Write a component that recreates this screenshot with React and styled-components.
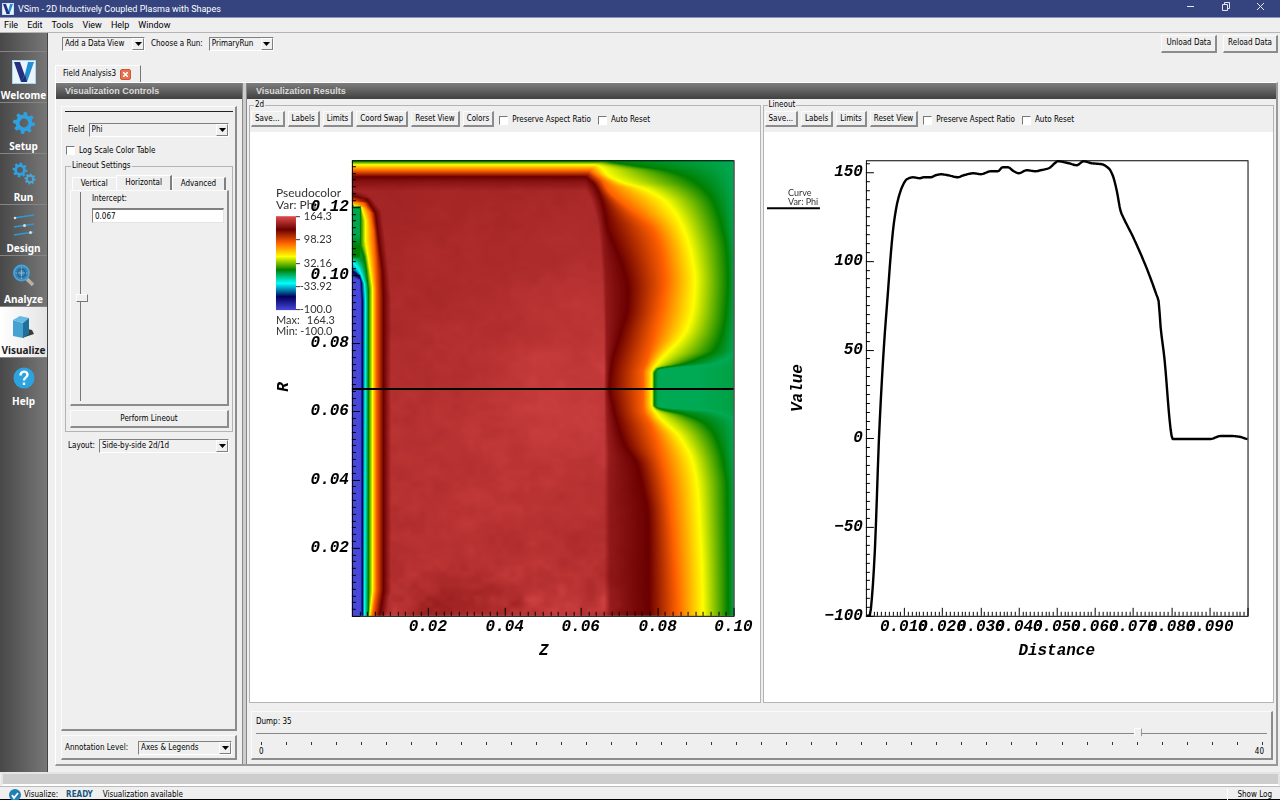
import React, { useEffect, useRef, useState } from 'react';
import styled, { createGlobalStyle, css } from 'styled-components';

const GlobalStyle = createGlobalStyle`
  * {
    box-sizing: border-box;
  }
  body {
    margin: 0;
    background: #efefef;
    color: #000;
    font-family: 'DejaVu Sans Condensed', 'DejaVu Sans', sans-serif;
    font-size: 8px;
    line-height: 12px;
  }
  button, input, select {
    font: inherit;
    color: inherit;
    margin: 0;
  }
`;

/** layout */

const Window = styled.div`
  min-height: 100vh;
  display: flex;
  flex-direction: column;
  overflow: hidden;
`;

const TitleBar = styled.header`
  display: flex;
  align-items: center;
  height: 18px;
  padding: 0 2px;
  background: #35447f;
  border-bottom: 1px solid #8d97b8;
  color: #fff;
`;

const WindowTitle = styled.h1`
  flex: 1;
  margin: 0;
  padding-left: 4px;
  font-family: Roboto, sans-serif;
  font-size: 9px;
  font-weight: 400;
`;

const WindowButton = styled.button`
  width: 35px;
  height: 16px;
  padding: 0;
  border: 0;
  background: none;
  color: #e4e7f2;
`;

const MenuBar = styled.nav`
  display: flex;
  align-items: center;
  gap: 9px;
  height: 15px;
  padding: 0 4px;
  border-bottom: 1px solid #b5b5b5;
`;

const MenuItem = styled.button`
  padding: 0;
  border: 0;
  background: none;
  font-family: Roboto, sans-serif;
  font-size: 9px;
`;

const Body = styled.div`
  flex: 1;
  display: flex;
`;

const Sidebar = styled.nav`
  flex: none;
  width: 48px;
  padding-top: 18px;
  background: linear-gradient(90deg, #484848, #777);
  border-right: 1px solid #444;
`;

const SideItem = styled.button`
  display: flex;
  flex-direction: column;
  align-items: center;
  justify-content: flex-end;
  gap: 5px;
  width: 100%;
  height: 51px;
  padding: 0;
  border: 0;
  border-top: 1px solid #858585;
  background: ${(props) => (props.$active ? 'linear-gradient(90deg, #fff, #e4e4e4)' : 'none')};
  color: ${(props) => (props.$active ? '#222' : '#fff')};
  font-family: 'Noto Sans', sans-serif;
  font-size: 10px;
  font-weight: 700;
  line-height: 13px;
`;

const Main = styled.main`
  flex: 1;
  min-width: 0;
  display: flex;
  flex-direction: column;
  padding: 0 2px 6px 7px;
`;

const TopBar = styled.div`
  display: flex;
  align-items: center;
  gap: 6px;
  height: 21px;
  padding-left: 7px;
`;

const Spacer = styled.div`
  flex: 1;
`;

const TabStrip = styled.div`
  display: flex;
  margin-top: 11px;
`;

const FileTab = styled.div`
  display: flex;
  align-items: center;
  gap: 4px;
  height: 17px;
  padding: 0 9px 0 7px;
  border-top: 1px solid #fff;
  border-left: 1px solid #fff;
  border-right: 1px solid #777;
`;

const CloseTab = styled.button`
  display: flex;
  align-items: center;
  justify-content: center;
  width: 11px;
  height: 11px;
  padding: 0;
  border: 1px solid #c9573b;
  border-radius: 2px;
  background: #e9714e;
  color: #fff;
`;

const Workspace = styled.div`
  flex: 1;
  display: flex;
  border: 1px solid #fff;
  border-right: 2px solid #999;
  border-bottom: 2px solid #999;
`;

const ControlsColumn = styled.section`
  flex: none;
  width: 186px;
  display: flex;
  flex-direction: column;
`;

const Splitter = styled.div`
  flex: none;
  width: 5px;
  background: #cdcdcd;
  border-left: 1px solid #888;
  border-right: 1px solid #888;
`;

const ResultsColumn = styled.section`
  flex: 1;
  min-width: 0;
  display: flex;
  flex-direction: column;
`;

const PanelTitle = styled.h2`
  height: 16px;
  margin: 0;
  padding-left: 9px;
  background: linear-gradient(#7e7e7e, #404040);
  color: #dadada;
  font-family: 'Liberation Sans', sans-serif;
  font-size: 9px;
  font-weight: 700;
  line-height: 16px;
`;

const raised = css`
  border: 1px solid #fbfbfb;
  border-right: 2px solid #8c8c8c;
  border-bottom: 2px solid #8c8c8c;
`;

const ControlsFrame = styled.div`
  ${raised}
  flex: 1;
  display: flex;
  flex-direction: column;
  margin: 7px 5px 4px 5px;
  padding: 4px 2px 4px 3px;
`;

const Rule = styled.hr`
  width: 100%;
  margin: 0 0 11px;
  border: 0;
  border-top: 1px solid #222;
`;

const Row = styled.div`
  display: flex;
  align-items: center;
  gap: 4px;
  height: 14px;
  padding: 0 4px 0 3px;
`;

const LayoutRow = styled(Row)`
  margin-top: 7px;
`;

const CheckRow = styled.div`
  display: flex;
  align-items: center;
  height: 13px;
  margin: 7px 0 3px 1px;
`;

const CheckLabel = styled.label`
  display: flex;
  align-items: center;
  gap: 4px;
`;

const Checkbox = styled.input`
  appearance: none;
  width: 9px;
  height: 9px;
  border: 1px solid #fff;
  border-top-color: #777;
  border-left-color: #777;
  background: #fff;
  &:checked {
    background: #555;
  }
`;

const Button = styled.button`
  ${raised}
  height: ${(props) => (props.$tall ? 18 : 16)}px;
  padding: 0 ${(props) => (props.$tall ? 4 : 3)}px;
  background: #efefef;
  line-height: 12px;
  white-space: nowrap;
`;

const WideButton = styled(Button)`
  display: block;
  width: 100%;
`;

const SelectBox = styled.span`
  display: grid;
  flex: ${(props) => (props.$width ? 'none' : 1)};
  width: ${(props) => (props.$width ? `${props.$width}px` : 'auto')};
  height: 14px;
  border: 1px solid #fff;
  border-top-color: #808080;
  border-left-color: #808080;
`;

const Select = styled.select`
  grid-area: 1 / 1;
  appearance: none;
  width: 100%;
  height: 12px;
  padding: 0 12px 0 2px;
  border: 0;
  border-radius: 0;
  background: #f0f0f0;
  line-height: 12px;
`;

const SelectArrow = styled.span`
  grid-area: 1 / 1;
  justify-self: end;
  display: flex;
  align-items: center;
  justify-content: center;
  width: 12px;
  border: 1px solid #fff;
  border-right-color: #808080;
  border-bottom-color: #808080;
  background: #efefef;
  pointer-events: none;
`;

const Group = styled.fieldset`
  min-width: 0;
  margin: 0;
  padding: 0 3px 3px 4px;
  border: 1px solid #b4b4b4;
`;

const Legend = styled.legend`
  height: 12px;
  margin-left: 1px;
  padding: 0 1px;
  line-height: 12px;
`;

const SubTabs = styled.div`
  display: flex;
  align-items: flex-end;
  height: 15px;
  margin: 3px 3px 0 2px;
`;

const SubTab = styled.button`
  flex: auto;
  height: ${(props) => (props.$active ? 15 : 13)}px;
  padding: 0;
  border: 0;
  border-top: 1px solid #fff;
  border-left: 1px solid #fff;
  border-right: ${(props) => (props.$flat ? '1px solid #efefef' : '2px solid #808080')};
  background: none;
`;

const SubPage = styled.div`
  ${raised}
  display: flex;
  gap: 4px;
  height: 216px;
  padding: 1px 3px 3px 4px;
  margin-bottom: 4px;
`;

const InterceptSlider = styled.input`
  appearance: none;
  writing-mode: vertical-lr;
  direction: rtl;
  width: 13px;
  height: 209px;
  background: linear-gradient(#777, #777) 5px 0 / 1px 100% no-repeat;
  &::-webkit-slider-thumb {
    appearance: none;
    width: 12px;
    height: 8px;
    border: 1px solid #fff;
    border-right-color: #777;
    border-bottom-color: #777;
    background: #efefef;
  }
`;

const InterceptField = styled.label`
  flex: 1;
  display: flex;
  flex-direction: column;
  gap: 3px;
  padding-top: 1px;
`;

const TextInput = styled.input`
  width: 100%;
  height: 15px;
  padding: 0 2px;
  border: 1px solid #e4e4e4;
  border-top: 2px solid #808080;
  border-left: 1px solid #808080;
  background: #fff;
`;

const AnnotationFrame = styled.div`
  ${raised}
  display: flex;
  align-items: center;
  justify-content: space-between;
  height: 25px;
  margin: 0 5px 4px 5px;
  padding: 1px 3px 0;
`;

const Plots = styled.div`
  flex: 1;
  display: flex;
  gap: 2px;
  padding: 0 2px 8px 2px;
`;

const PlotGroup = styled.fieldset`
  flex: 1;
  min-width: 0;
  display: flex;
  flex-direction: column;
  margin: 0;
  padding: 0;
  border: 1px solid #b4b4b4;
`;

const PlotLegend = styled(Legend)`
  margin-left: 4px;
`;

const PlotTools = styled.div`
  display: flex;
  align-items: flex-start;
  gap: 3px;
  height: 21px;
  padding-left: 1px;
`;

const ToolCheck = styled(CheckLabel)`
  height: 18px;
  padding: 0 2px;
`;

const PlotArea = styled.div`
  flex: 1;
  display: flex;
  background: #fff;
`;

const Chart = styled.svg`
  flex: 1;
  width: 100%;
  min-width: 0;
  font-family: 'Liberation Mono', monospace;
  font-size: 16px;
  font-style: italic;
  font-weight: 700;
`;

const LegendText = styled.text`
  font-family: Lato, sans-serif;
  font-size: ${(props) => props.$size || 11}px;
  font-style: normal;
  font-weight: 400;
  fill: #333;
`;

const DumpFrame = styled.div`
  ${raised}
  display: flex;
  flex-direction: column;
  height: 49px;
  margin: 0 3px 4px 4px;
  padding: 4px 4px 0 4px;
`;

const DumpSlider = styled.input`
  appearance: none;
  width: 100%;
  height: 12px;
  background: linear-gradient(#888, #888) 0 5px / 100% 1px no-repeat;
  &::-webkit-slider-thumb {
    appearance: none;
    width: 8px;
    height: 12px;
    border: 1px solid #fff;
    border-right: 1px solid #666;
    background: #efefef;
    clip-path: polygon(0 0, 100% 0, 100% 65%, 50% 100%, 0 65%);
  }
`;

const Ticks = styled.div`
  display: flex;
  justify-content: space-between;
  margin: 2px 4px 2px 5px;
`;

const Tick = styled.span`
  width: 1px;
  height: 3px;
  background: #333;
`;

const TickLabels = styled.div`
  display: flex;
  justify-content: space-between;
  padding: 0 3px;
  line-height: 10px;
`;

const DockStrip = styled.div`
  height: 14px;
  margin: 0 0 0 1px;
  border: 2px solid #e4e4e4;
  border-bottom-color: #fff;
  background: #cdcdcd;
`;

const StatusBar = styled.footer`
  display: flex;
  align-items: center;
  gap: 3px;
  height: 14px;
  padding: 3px 8px 0 9px;
  border-top: 1px solid #bbb;
  border-bottom: 1px solid #000;
`;

const StatusState = styled.strong`
  margin: 0 7px 0 5px;
  color: #17587f;
`;

const ShowLog = styled.button`
  height: 12px;
  padding: 0 0 0 9px;
  border: 0;
  border-left: 1px solid #fff;
  background: none;
`;

/** icons */

const LogoIcon = ({ size = 24 }) => (
  <svg width={size} height={size} viewBox="0 0 24 24" aria-hidden="true">
    <rect width="24" height="24" fill="#a9d3ee" />
    <rect x="1" y="1" width="22" height="22" fill="#e9f4fb" />
    <path d="M2 2h6l5 14-1 6H9z" fill="#27307c" />
    <path d="M16 2h6l-7 20H9l4-8z" fill="#238fd0" />
    <path d="M9 22l4-7 2 7z" fill="#222a70" />
  </svg>
);

// closed outline of a gear with square-ish teeth
const gearPath = (cx, cy, r, teeth) => {
  const pts = [];
  for (let i = 0; i < teeth; i++) {
    [
      [-0.3, 0.76],
      [-0.2, 1],
      [0.2, 1],
      [0.3, 0.76],
    ].forEach(([da, k]) => {
      const a = ((i + da) / teeth) * Math.PI * 2 + 0.15;
      pts.push(`${(cx + Math.sin(a) * r * k).toFixed(1)} ${(cy - Math.cos(a) * r * k).toFixed(1)}`);
    });
  }
  const h = r * 0.4;
  return `M${pts.join('L')}Z M${cx - h} ${cy}a${h} ${h} 0 1 0 ${h * 2} 0a${h} ${h} 0 1 0 ${-h * 2} 0Z`;
};

const SetupIcon = () => (
  <svg width="24" height="24" viewBox="0 0 24 24" aria-hidden="true">
    <path d={gearPath(12, 12, 11, 8)} fill="#2fa0e0" fillRule="evenodd" />
  </svg>
);

const RunIcon = () => (
  <svg width="24" height="24" viewBox="0 0 24 24" aria-hidden="true">
    <path d={gearPath(8, 8, 7.5, 8)} fill="#2fa0e0" fillRule="evenodd" />
    <path d={gearPath(18, 17, 5.6, 8)} fill="#45a8dd" fillRule="evenodd" />
  </svg>
);

const DesignIcon = () => (
  <svg width="24" height="24" viewBox="0 0 24 24" aria-hidden="true">
    <path d="M2 5l20-3M2 14l20-3M2 22l20-3" stroke="#2b9bd8" strokeWidth="1.6" />
    <circle cx="3" cy="5" r="1.3" fill="#ddd" />
    <circle cx="12.500" cy="12.500" r="1.500" fill="#ddd" />
    <circle cx="18.500" cy="19.500" r="1.500" fill="#ddd" />
  </svg>
);

const AnalyzeIcon = () => (
  <svg width="24" height="24" viewBox="0 0 24 24" aria-hidden="true">
    <path d="M15 15l6 6" stroke="#b8b0a4" strokeWidth="3.500" />
    <circle cx="9.500" cy="9" r="7.500" fill="#3a7fae" stroke="#43a5dc" strokeWidth="1.800" />
    <path d="M9.500 3v12M3.500 9h12" stroke="#7fb9dc" strokeWidth="1" />
    <circle cx="9.500" cy="9" r="4" fill="none" stroke="#27587a" />
  </svg>
);

const VisualizeIcon = () => (
  <svg width="24" height="24" viewBox="0 0 24 24" aria-hidden="true">
    <path d="M10 23l12-4-2-4-4-1z" fill="#3d3d3d" />
    <path d="M1 5l10 3v15l-10-2z" fill="#46a3d1" />
    <path d="M1 5l7-4 9 2-6 5z" fill="#66b9df" />
    <path d="M11 8l6-5v16l-6 4z" fill="#1f6f9c" />
  </svg>
);

const HelpIcon = () => (
  <svg width="24" height="24" viewBox="0 0 24 24" aria-hidden="true">
    <circle cx="12" cy="12" r="10.500" fill="#2ba3df" />
    <path
      d="M8.500 9.500c0-5 7-5 7-.8 0 2.800-3.500 2.600-3.500 5.800M12 16.500v2.500"
      fill="none"
      stroke="#fff"
      strokeWidth="2.400"
    />
  </svg>
);

const CheckIcon = () => (
  <svg width="12" height="12" viewBox="0 0 12 12" aria-hidden="true">
    <circle cx="6" cy="6" r="6" fill="#1f7fb2" />
    <path d="M3 6l2 3 4-5" fill="none" stroke="#fff" strokeWidth="1.800" />
  </svg>
);

const sideItems = [
  { name: 'Welcome', Icon: LogoIcon },
  { name: 'Setup', Icon: SetupIcon },
  { name: 'Run', Icon: RunIcon },
  { name: 'Design', Icon: DesignIcon },
  { name: 'Analyze', Icon: AnalyzeIcon },
  { name: 'Visualize', Icon: VisualizeIcon },
  { name: 'Help', Icon: HelpIcon },
];

/** potential field, all tables are [row, column] in field cells */

const FIELD_W = 382;
const FIELD_H = 456;

const colorStops = [
  [0, [71, 71, 219]],
  [0.143, [0, 0, 91]],
  [0.285, [0, 255, 255]],
  [0.429, [0, 127, 0]],
  [0.571, [255, 255, 0]],
  [0.714, [255, 96, 0]],
  [0.857, [107, 0, 0]],
  [1, [224, 76, 76]],
];

// contours around the electrode on the left, from low to high potential
const leftContours = [
  [0, [[112, -8], [117, 1], [119, 7], [140, 8], [456, 8]]],
  [0.143, [[106, -8], [111, 1], [115, 7], [122, 9], [140, 10], [456, 10]]],
  [0.285, [[98, -10], [102, 1], [108, 6], [115, 9], [123, 12], [140, 13], [456, 12]]],
  [0.429, [[42, -20], [46, 8], [85, 8], [96, 12], [110, 14], [130, 16], [456, 16]]],
  [0.571, [[40, -20], [45, 2], [47, 9], [60, 13], [80, 13], [93, 15], [113, 18], [127, 20], [430, 20], [456, 17]]],
  [0.714, [[36, -20], [41, 3], [42, 11], [52, 18], [70, 21], [100, 23], [130, 24], [430, 24], [456, 20]]],
  [0.857, [[30, -20], [36, 3], [38, 14], [53, 23], [80, 26], [110, 30], [137, 31], [430, 31], [456, 27]]],
  [1, [[24, -30], [30, 3], [34, 16], [50, 29], [80, 33], [137, 39], [430, 39], [456, 34]]],
];

// contours of the sheath on the right, from high to low potential
const rightContours = [
  [1, [[0, 205], [16, 218], [30, 234], [45, 241], [67, 246], [120, 250], [180, 252], [456, 252]]],
  [0.93, [[0, 218], [16, 229], [30, 240], [45, 246], [67, 250], [140, 254], [228, 254], [260, 255], [300, 257], [456, 258]]],
  [0.857, [[0, 226], [16, 234], [22, 241], [30, 246], [45, 251], [67, 255], [87, 263], [107, 271], [130, 276], [150, 275],
    [167, 270], [187, 264], [200, 260], [229, 257], [243, 260], [263, 265], [285, 273], [303, 285], [327, 291], [353, 296], [393, 297], [456, 297]]],
  [0.714, [[0, 228], [10, 237], [20, 250], [30, 256], [45, 273], [57, 288], [67, 299], [80, 306], [100, 311], [120, 313],
    [147, 309], [167, 304], [180, 301], [200, 295], [213, 291], [247, 291], [267, 300], [293, 308], [323, 315], [347, 318], [380, 321], [456, 325]]],
  [0.571, [[0, 230], [6, 248], [15, 256], [22, 271], [28, 292], [42, 315], [67, 331], [97, 340], [120, 343], [147, 341],
    [168, 335], [180, 327], [190, 317], [202, 306], [213, 300], [243, 300], [255, 306], [277, 328], [303, 341], [333, 346], [367, 348], [407, 350], [456, 351]]],
  [0.429, [[0, 255], [5, 281], [10, 315], [20, 341], [40, 361], [67, 370], [93, 375], [120, 376], [153, 374], [173, 370],
    [190, 362], [198, 346], [204, 328], [208, 306], [213, 302], [245, 302], [248, 306], [255, 335], [265, 355], [280, 365], [300, 371], [327, 375], [456, 376]]],
  [0.381, [[0, 383], [190, 383], [202, 366], [210, 306], [246, 306], [252, 366], [262, 383], [456, 383]]],
  [0.381, [[0, 384], [190, 384], [202, 368], [210, 342], [246, 342], [252, 368], [262, 384], [456, 384]]],
  [0.392, [[0, 386], [456, 386]]],
];

const topProfile = [[0, 0.4], [1, 0.45], [4, 0.571], [10, 0.714], [16, 0.857], [21, 0.93], [30, 1]];
const electrodeProfile = [[46, 0.385], [75, 0.385], [86, 0.43], [96, 0.43], [102, 0.3]];

const interpolate = (table, v) => {
  if (v <= table[0][0]) return table[0][1];
  for (let i = 1; i < table.length; i++) {
    const [a, va] = table[i - 1];
    const [b, vb] = table[i];
    if (v <= b) return b === a ? vb : va + ((vb - va) * (v - a)) / (b - a);
  }
  return table[table.length - 1][1];
};

const slopeAt = (table, i) => {
  if (i <= 0 || i >= table.length - 1) return 0;
  const before = (table[i][1] - table[i - 1][1]) / (table[i][0] - table[i - 1][0]);
  const after = (table[i + 1][1] - table[i][1]) / (table[i + 1][0] - table[i][0]);
  return before * after <= 0 ? 0 : (2 * before * after) / (before + after);
};

// monotone cubic through the points of a table
const spline = (table, v) => {
  const last = table.length - 1;
  if (v <= table[0][0]) return table[0][1];
  if (v >= table[last][0]) return table[last][1];
  const i = table.findIndex(([p]) => p > v);
  const [a, va] = table[i - 1];
  const [b, vb] = table[i];
  const h = b - a;
  const s = (v - a) / h;
  return (
    va * (1 + 2 * s) * (1 - s) ** 2 +
    vb * s * s * (3 - 2 * s) +
    h * slopeAt(table, i - 1) * s * (1 - s) ** 2 -
    h * slopeAt(table, i) * s * s * (1 - s)
  );
};

const colorAt = (t) => {
  for (let i = 1; i < colorStops.length; i++) {
    const [b, cb] = colorStops[i];
    const [a, ca] = colorStops[i - 1];
    if (t <= b) {
      const k = Math.max(0, (t - a) / (b - a));
      return ca.map((c, n) => c + (cb[n] - c) * k);
    }
  }
  return colorStops[colorStops.length - 1][1];
};

const hash = (x, y) => {
  const s = Math.sin(x * 127.1 + y * 311.7) * 43758.5453;
  return s - Math.floor(s);
};

const noise = (x, y) => {
  const ix = Math.floor(x);
  const iy = Math.floor(y);
  const fx = (x - ix) ** 2 * (3 - 2 * (x - ix));
  const fy = (y - iy) ** 2 * (3 - 2 * (y - iy));
  const top = hash(ix, iy) * (1 - fx) + hash(ix + 1, iy) * fx;
  const bottom = hash(ix, iy + 1) * (1 - fx) + hash(ix + 1, iy + 1) * fx;
  return top * (1 - fy) + bottom * fy - 0.5;
};

const plasmaLevel = (x, y) => {
  const core = Math.exp(-(((x - 235) / 120) ** 2) - ((y - 205) / 120) ** 2);
  const rough = 0.012 + 0.016 * Math.min(1, y / 400) + 0.07 * Math.max(0, (y - 380) / 76) ** 2;
  const n = noise(x / 38, y / 34) * 0.5 + noise(x / 15, y / 13) * 0.4 + noise(x / 7, y / 6) * 0.25;
  return 0.924 + 0.024 * Math.min(1, y / 300) + 0.024 * core + n * rough;
};

const drawField = (canvas) => {
  const ctx = canvas.getContext('2d');
  const image = ctx.createImageData(FIELD_W, FIELD_H);
  for (let y = 0; y < FIELD_H; y++) {
    const left = leftContours.map(([t, pts]) => [interpolate(pts, y), t]);
    const right = rightContours.map(([t, pts]) => [spline(pts, y), t]);
    const top = interpolate(topProfile, y);
    for (let x = 0; x < FIELD_W; x++) {
      let t = Math.min(top, interpolate(left, x), interpolate(right, x));
      if (x < 8 && y > 46 && y < 98) t = interpolate(electrodeProfile, y);
      if (t > 0.857) t = 0.857 + ((t - 0.857) / 0.143) * (plasmaLevel(x, y) - 0.857);
      const [r, g, b] = colorAt(t);
      image.data.set([r, g, b, 255], (y * FIELD_W + x) * 4);
    }
  }
  ctx.putImageData(image, 0, 0);
};

/** plots */

const BOX = { x: 102, y: 28, w: 382, h: 456 };
const BOTTOM = BOX.y + BOX.h;

const range = (from, to, step) => {
  const out = [];
  for (let i = 0; from + i * step <= to + step / 1000; i++) out.push(from + i * step);
  return out;
};

function AxisTicks({ xStep, xMajor, yFrom, yTo, yStep, yMajor }) {
  const x = (i) => Math.round(BOX.x + (i * xStep * BOX.w) / 0.1) + 0.5;
  const y = (v) => Math.round(BOTTOM - ((v - yFrom) / (yTo - yFrom)) * BOX.h) + 0.5;
  const xCount = Math.round(0.1 / xStep);
  return (
    <g stroke="#000" strokeWidth="1">
      {range(1, xCount, 1).map((i) => (
        <line key={i} x1={x(i)} x2={x(i)} y1={BOTTOM} y2={BOTTOM - (i % xMajor ? 4 : 8)} />
      ))}
      {range(yFrom, yTo, yStep).map((v, i) => (
        <line key={v} y1={y(v)} y2={y(v)} x1={BOX.x} x2={BOX.x + (i % yMajor ? 4 : 8)} />
      ))}
      <rect x={BOX.x + 0.5} y={BOX.y + 0.5} width={BOX.w} height={BOX.h} fill="none" />
    </g>
  );
}

function FieldPlot() {
  const canvasRef = useRef(null);

  useEffect(() => {
    drawField(canvasRef.current);
  }, []);

  return (
    <Chart viewBox="0 0 510 570" role="img" aria-label="Phi over Z and R">
      <defs>
        <linearGradient id="hot" x1="0" y1="1" x2="0" y2="0">
          {colorStops.map(([t, c]) => (
            <stop key={t} offset={t} stopColor={`rgb(${c.join(',')})`} />
          ))}
        </linearGradient>
      </defs>
      <foreignObject x={BOX.x} y={BOX.y} width={BOX.w} height={BOX.h}>
        <canvas ref={canvasRef} width={FIELD_W} height={FIELD_H} style={{ display: 'block' }} />
      </foreignObject>
      <AxisTicks xStep={0.002} xMajor={10} yFrom={0} yTo={0.1337} yStep={0.002} yMajor={10} />
      <line x1={BOX.x} x2={BOX.x + BOX.w} y1="257" y2="257" stroke="#000" strokeWidth="2" />

      <LegendText x="26" y="65" $size={12}>Pseudocolor</LegendText>
      <LegendText x="26" y="77" $size={12}>Var: Phi</LegendText>
      <rect x="26" y="84" width="20" height="94" fill="url(#hot)" />
      {['164.3', '98.23', '32.16', '-33.92', '-100.0'].map((label, i) => (
        <React.Fragment key={label}>
          <line x1="46" x2="50" y1={84.5 + Math.round(i * 23.3)} y2={84.5 + Math.round(i * 23.3)} stroke="#333" />
          <LegendText x="82" y={88 + Math.round(i * 23.3)} textAnchor="end">{label}</LegendText>
        </React.Fragment>
      ))}
      <LegendText x="26" y="192">Max:</LegendText>
      <LegendText x="85" y="192" textAnchor="end">164.3</LegendText>
      <LegendText x="26" y="203">Min: -100.0</LegendText>

      {['0.02', '0.04', '0.06', '0.08', '0.10', '0.12'].map((label) => (
        <text key={label} x="99" y={Math.round(BOTTOM - Number(label) * 3410) + 4} textAnchor="end">{label}</text>
      ))}
      {['0.02', '0.04', '0.06', '0.08', '0.10'].map((label) => (
        <text key={label} x={Math.round(BOX.x + Number(label) * 3820)} y="499" textAnchor="middle">{label}</text>
      ))}
      <text x="294" y="523" textAnchor="middle">Z</text>
      <text transform="translate(38 255) rotate(-90)" textAnchor="middle">R</text>
    </Chart>
  );
}

const curve = [
  [103, 484], [106, 483], [108, 466], [111, 418], [113, 365], [115, 308], [120, 215], [124, 161], [127, 121], [130, 91],
  [134, 68], [139, 53], [143, 47], [149, 45], [156, 46], [160, 45], [167, 45], [172, 43], [177, 42], [184, 43], [194, 45],
  [200, 43], [210, 41], [217, 42], [227, 39], [234, 39], [239, 35], [244, 35], [250, 39], [255, 41], [263, 38], [272, 39],
  [277, 38], [285, 36], [291, 31], [294, 29], [305, 31], [313, 33], [320, 29], [328, 31], [338, 32], [345, 36], [349, 43],
  [353, 58], [357, 79], [360, 86], [370, 106], [383, 136], [393, 163], [395, 169], [397, 195], [401, 228], [406, 288],
  [408, 304], [409, 307], [447, 307], [457, 304], [468, 304], [477, 305], [484, 307],
];

const LineoutPlot = () => (
  <Chart viewBox="0 0 510 570" role="img" aria-label="Phi along the lineout">
    <AxisTicks xStep={0.001} xMajor={10} yFrom={-100} yTo={156.7} yStep={5} yMajor={10} />
    <polyline
      points={range(103, 484, 1).map((x) => `${x},${spline(curve, x).toFixed(1)}`).join(' ')}
      fill="none"
      stroke="#000"
      strokeWidth="2.400"
      strokeLinejoin="round"
    />
    <LegendText x="24" y="64" $size={9}>Curve</LegendText>
    <LegendText x="24" y="73" $size={9}>Var: Phi</LegendText>
    <line x1="3" x2="56" y1="76" y2="76" stroke="#000" strokeWidth="2" />
    {[150, 100, 50, 0, -50, -100].map((v) => (
      <text key={v} x="99" y={Math.round(BOTTOM - (v + 100) * 1.776) + 4} textAnchor="end">
        {String(v).replace('-', '−')}
      </text>
    ))}
    {[1, 2, 3, 4, 5, 6, 7, 8, 9].map((n) => (
      <text key={n} x={Math.round(BOX.x + n * 38.2)} y="499" textAnchor="middle">{`0.0${n}0`}</text>
    ))}
    <text x="293" y="523" textAnchor="middle">Distance</text>
    <text transform="translate(38 256) rotate(-90)" textAnchor="middle">Value</text>
  </Chart>
);

/** controls */

const Dropdown = ({ id, width, options, label }) => (
  <SelectBox $width={width}>
    <Select id={id} aria-label={label}>
      {options.map((o) => (
        <option key={o}>{o}</option>
      ))}
    </Select>
    <SelectArrow>
      <svg width="7" height="4" viewBox="0 0 7 4" aria-hidden="true">
        <path d="M0 0h7L3.500 4z" fill="#000" />
      </svg>
    </SelectArrow>
  </SelectBox>
);

const PlotPanel = ({ title, tools, children }) => (
  <PlotGroup>
    <PlotLegend>{title}</PlotLegend>
    <PlotTools>
      {tools.map((tool) => (
        <Button key={tool}>{tool}</Button>
      ))}
      <ToolCheck>
        <Checkbox type="checkbox" />
        Preserve Aspect Ratio
      </ToolCheck>
      <ToolCheck>
        <Checkbox type="checkbox" />
        Auto Reset
      </ToolCheck>
    </PlotTools>
    <PlotArea>{children}</PlotArea>
  </PlotGroup>
);

function App() {
  const [intercept, setIntercept] = useState('0.067');
  const [dump, setDump] = useState(35);

  return (
    <Window>
      <GlobalStyle />
      <TitleBar>
        <LogoIcon size={12} />
        <WindowTitle>VSim - 2D Inductively Coupled Plasma with Shapes</WindowTitle>
        <WindowButton aria-label="Minimize">
          <svg width="9" height="9" viewBox="0 0 9 9"><path d="M1 4.500h7" stroke="currentColor" /></svg>
        </WindowButton>
        <WindowButton aria-label="Restore">
          <svg width="9" height="9" viewBox="0 0 9 9" fill="none" stroke="currentColor">
            <path d="M1.500 2.500h5v6h-5zM3.500 2V.500h5v6H7" />
          </svg>
        </WindowButton>
        <WindowButton aria-label="Close">
          <svg width="9" height="9" viewBox="0 0 9 9"><path d="M1 1l7 7M8 1L1 8" stroke="currentColor" /></svg>
        </WindowButton>
      </TitleBar>
      <MenuBar>
        {['File', 'Edit', 'Tools', 'View', 'Help', 'Window'].map((m) => (
          <MenuItem key={m}>{m}</MenuItem>
        ))}
      </MenuBar>

      <Body>
        <Sidebar>
          {sideItems.map(({ name, Icon }) => (
            <SideItem key={name} $active={name === 'Visualize'}>
              <Icon />
              {name}
            </SideItem>
          ))}
        </Sidebar>

        <Main>
          <TopBar>
            <Dropdown label="Data view" width={83} options={['Add a Data View']} />
            <label htmlFor="run">Choose a Run:</label>
            <Dropdown id="run" width={65} options={['PrimaryRun']} />
            <Spacer />
            <Button $tall>Unload Data</Button>
            <Button $tall>Reload Data</Button>
          </TopBar>
          <TabStrip>
            <FileTab>
              Field Analysis3
              <CloseTab aria-label="Close tab">
                <svg width="5" height="5" viewBox="0 0 5 5">
                  <path d="M0 0l5 5M5 0L0 5" stroke="currentColor" strokeWidth="1.500" />
                </svg>
              </CloseTab>
            </FileTab>
          </TabStrip>

          <Workspace>
            <ControlsColumn>
              <PanelTitle>Visualization Controls</PanelTitle>
              <ControlsFrame>
                <Rule />
                <Row>
                  <label htmlFor="field">Field</label>
                  <Dropdown id="field" options={['Phi']} />
                </Row>
                <CheckRow>
                  <CheckLabel>
                    <Checkbox type="checkbox" />
                    Log Scale Color Table
                  </CheckLabel>
                </CheckRow>
                <Group>
                  <Legend>Lineout Settings</Legend>
                  <SubTabs>
                    <SubTab $flat>Vertical</SubTab>
                    <SubTab $active>Horizontal</SubTab>
                    <SubTab>Advanced</SubTab>
                  </SubTabs>
                  <SubPage>
                    <InterceptSlider
                      type="range"
                      aria-label="Intercept position"
                      min="0"
                      max="0.136"
                      step="0.001"
                      value={intercept}
                      onChange={(e) => setIntercept(e.target.value)}
                    />
                    <InterceptField>
                      Intercept:
                      <TextInput value={intercept} onChange={(e) => setIntercept(e.target.value)} />
                    </InterceptField>
                  </SubPage>
                  <WideButton $tall>Perform Lineout</WideButton>
                </Group>
                <LayoutRow>
                  <label htmlFor="layout">Layout:</label>
                  <Dropdown id="layout" options={['Side-by-side 2d/1d']} />
                </LayoutRow>
              </ControlsFrame>
              <AnnotationFrame>
                <label htmlFor="annotation">Annotation Level:</label>
                <Dropdown id="annotation" width={94} options={['Axes & Legends']} />
              </AnnotationFrame>
            </ControlsColumn>

            <Splitter />

            <ResultsColumn>
              <PanelTitle>Visualization Results</PanelTitle>
              <Plots>
                <PlotPanel title="2d" tools={['Save...', 'Labels', 'Limits', 'Coord Swap', 'Reset View', 'Colors']}>
                  <FieldPlot />
                </PlotPanel>
                <PlotPanel title="Lineout" tools={['Save...', 'Labels', 'Limits', 'Reset View']}>
                  <LineoutPlot />
                </PlotPanel>
              </Plots>
              <DumpFrame>
                <label htmlFor="dump">Dump: {dump}</label>
                <DumpSlider
                  id="dump"
                  type="range"
                  min="0"
                  max="40"
                  value={dump}
                  onChange={(e) => setDump(e.target.value)}
                />
                <Ticks>
                  {range(0, 40, 1).map((i) => (
                    <Tick key={i} />
                  ))}
                </Ticks>
                <TickLabels>
                  <span>0</span>
                  <span>40</span>
                </TickLabels>
              </DumpFrame>
            </ResultsColumn>
          </Workspace>
        </Main>
      </Body>

      <DockStrip />
      <StatusBar>
        <CheckIcon />
        Visualize:
        <StatusState>READY</StatusState>
        Visualization available
        <Spacer />
        <ShowLog>Show Log</ShowLog>
      </StatusBar>
    </Window>
  );
}

export default App;
